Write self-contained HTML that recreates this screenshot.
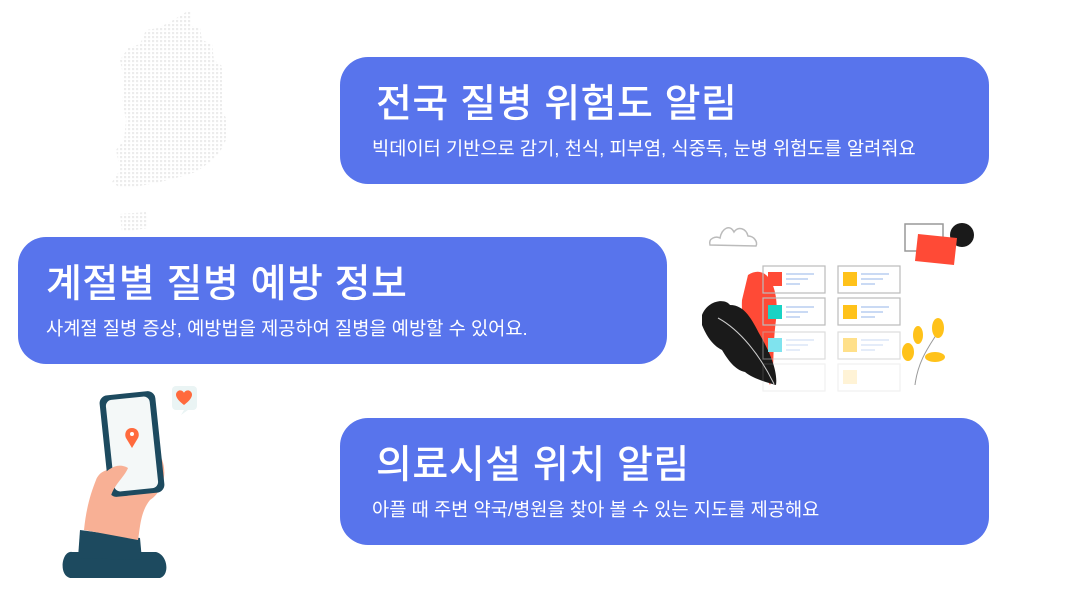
<!DOCTYPE html>
<html><head><meta charset="utf-8"><style>
body{margin:0;width:1080px;height:593px;background:#fff;position:relative;overflow:hidden;font-family:"Liberation Sans","Noto Sans CJK KR",sans-serif}
.card{position:absolute;background:#5874ec;border-radius:28px;color:#fff;width:649px;height:127px}
.t{position:absolute;left:36px;top:16px;font-size:39px;font-weight:500;letter-spacing:0.5px;white-space:nowrap}
.s{position:absolute;left:32px;top:77px;font-size:18.7px;white-space:nowrap}
</style></head><body>
<svg width="1080" height="593" style="position:absolute;left:0;top:0">
<defs><pattern id="d" width="4" height="4" patternUnits="userSpaceOnUse"><rect width="2.2" height="2.2" fill="#ececec"/></pattern></defs>
<path d="M186 12 L192 12 L192 26 L200 28 L202 40 L212 44 L214 60 L222 66 L222 110 L226 118 L226 140 L220 152 L210 162 L196 172 L176 178 L160 182 L140 186 L120 188 L112 182 L120 170 L116 150 L124 140 L126 120 L122 100 L124 80 L120 60 L128 48 L140 44 L146 30 L158 28 L170 22 Z" fill="url(#d)"/>
<path d="M120 214 L146 212 L148 228 L122 232 Z" fill="url(#d)"/>
<path d="M710 245 C708 238 716 236 720 238 C722 228 730 224 734 232 C738 226 746 228 748 236 C754 236 758 242 756 246 Z" fill="none" stroke="#bbb" stroke-width="1.5"/>
<rect x="905" y="224" width="38" height="27" fill="none" stroke="#999" stroke-width="1.5"/>
<circle cx="962" cy="235" r="12" fill="#1a1a1a"/>
<polygon points="918,234 957,238 954,265 915,261" fill="#ff4a36"/>
<path d="M748 275 C768 262 780 290 776 320 C772 350 775 372 770 385 C758 360 740 330 742 300 Z" fill="#ff4a36"/>
<path d="M702 315 C708 300 725 298 730 305 C745 305 752 320 760 335 C770 352 778 372 776 385 C765 382 752 378 745 372 C735 370 728 360 722 350 C712 345 706 335 702 325 Z" fill="#1a1a1a"/>
<path d="M718 318 C740 330 760 355 774 384" stroke="#ccc" fill="none"/>
<g fill="none" stroke="#bbb" stroke-width="1.2">
<rect x="763" y="266" width="62" height="27"/><rect x="838" y="266" width="62" height="27"/>
<rect x="763" y="298" width="62" height="27"/><rect x="838" y="298" width="62" height="27"/>
<rect x="763" y="332" width="62" height="27" opacity=".5"/><rect x="838" y="332" width="62" height="27" opacity=".5"/>
<rect x="763" y="364" width="62" height="27" opacity=".2"/><rect x="838" y="364" width="62" height="27" opacity=".2"/>
</g>
<g stroke="#b8cdf0" stroke-width="1.5">
<path d="M786 274h28M786 279h22M786 284h14M861 274h28M861 279h22M861 284h14M786 307h28M786 312h22M786 317h14M861 307h28M861 312h22M861 317h14"/>
<path d="M786 340h28M786 345h22M786 350h14M861 340h28M861 345h22M861 350h14" opacity=".5"/>
</g>
<rect x="768" y="272" width="14" height="14" fill="#ff4a36"/><rect x="843" y="272" width="14" height="14" fill="#ffc21a"/>
<rect x="768" y="305" width="14" height="14" fill="#19d3c5"/><rect x="843" y="305" width="14" height="14" fill="#ffc21a"/>
<rect x="768" y="338" width="14" height="14" fill="#7fe3ee"/><rect x="843" y="338" width="14" height="14" fill="#ffe08a"/>
<rect x="843" y="370" width="14" height="14" fill="#fff3d6"/>
<path d="M915 385 C918 360 930 345 938 332" stroke="#999" fill="none"/>
<ellipse cx="938" cy="328" rx="6" ry="10" fill="#ffc21a"/><ellipse cx="918" cy="335" rx="5" ry="9" fill="#ffc21a"/>
<ellipse cx="935" cy="357" rx="10" ry="5" fill="#ffc21a"/><ellipse cx="908" cy="352" rx="6" ry="9" fill="#ffc21a"/>
<rect x="172" y="386" width="25" height="24" rx="4" fill="#eaf4f4"/>
<path d="M184 410 L181 415 L188 410 Z" fill="#eaf4f4"/>
<path d="M184 405 C176 399 174 394 178 391 C181 389 184 392 184 393 C184 392 187 389 190 391 C194 394 192 399 184 405 Z" fill="#ff6a3d"/>
<path d="M72 552 C62 550 58 575 70 578 L160 578 C170 575 168 555 156 552 Z" fill="#1d4a5f"/>
<path d="M80 530 L140 538 L142 560 L78 558 Z" fill="#1d4a5f"/>
<path d="M96 480 C100 470 110 468 120 470 L160 455 C168 470 165 490 150 500 C140 512 140 530 138 540 L84 530 C86 510 90 495 96 480 Z" fill="#f8b095"/>
<rect x="104" y="393" width="56" height="102" rx="8" fill="#1d4a5f" transform="rotate(-6 132 444)"/>
<rect x="110" y="398" width="44" height="92" rx="6" fill="#f4f8f8" transform="rotate(-6 132 444)"/>
<path d="M132 428 C126 428 124 434 126 438 L132 448 L138 438 C140 434 138 428 132 428 Z" fill="#ff6a3d"/>
<circle cx="132" cy="434" r="2" fill="#fff"/>
<path d="M98 480 C108 468 118 462 128 468 C124 478 112 486 110 500 Z" fill="#f8b095"/>
</svg>
<div class="card" style="left:340px;top:57px"><div class="t">전국 질병 위험도 알림</div><div class="s">빅데이터 기반으로 감기, 천식, 피부염, 식중독, 눈병 위험도를 알려줘요</div></div>
<div class="card" style="left:18px;top:237px"><div class="t" style="left:28px">계절별 질병 예방 정보</div><div class="s" style="left:28px">사계절 질병 증상, 예방법을 제공하여 질병을 예방할 수 있어요.</div></div>
<div class="card" style="left:340px;top:418px"><div class="t">의료시설 위치 알림</div><div class="s">아플 때 주변 약국/병원을 찾아 볼 수 있는 지도를 제공해요</div></div>
</body></html>
